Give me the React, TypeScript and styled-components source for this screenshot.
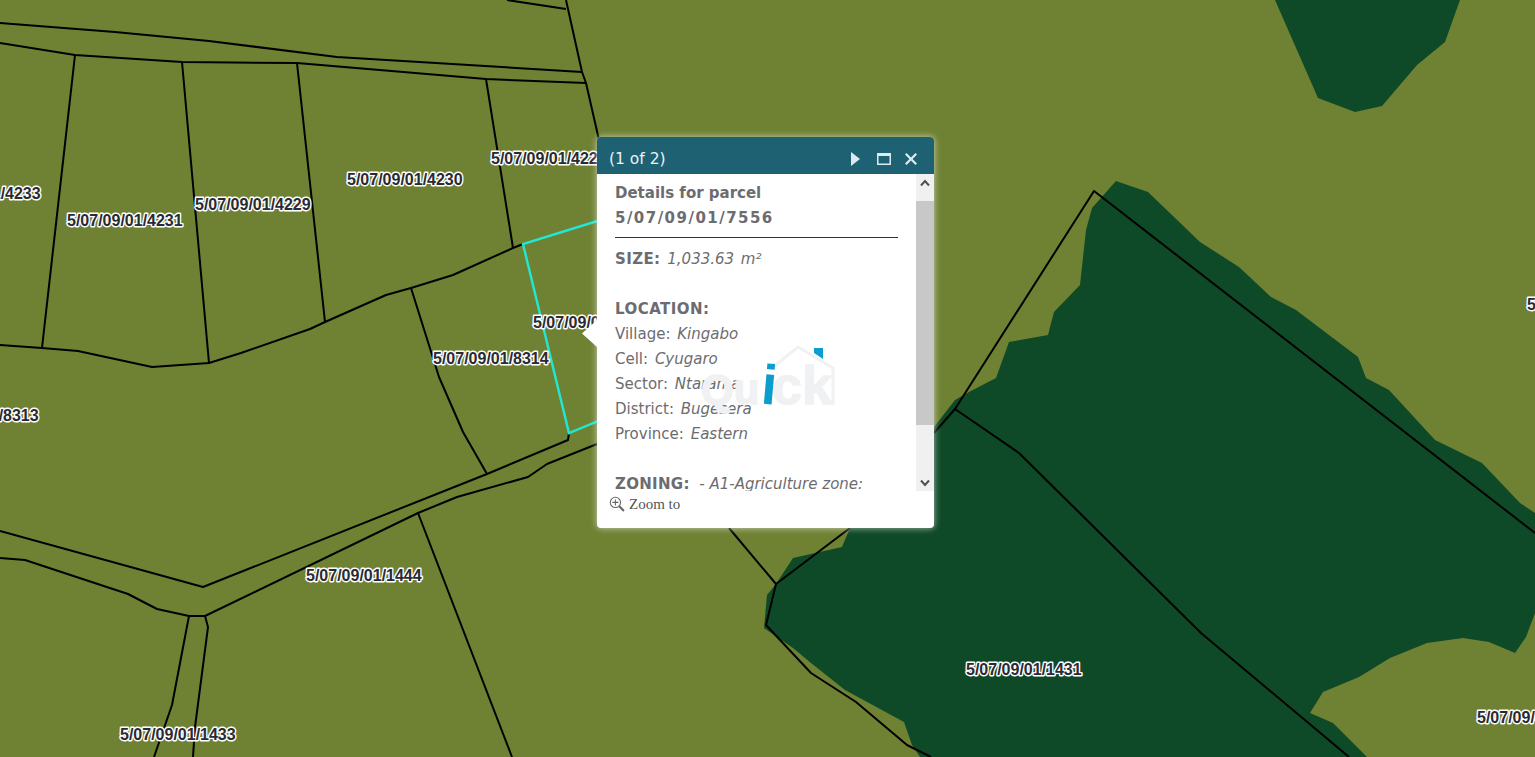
import React from "react";
import styled, { createGlobalStyle } from "styled-components";

const GlobalStyle = createGlobalStyle`
  html, body {
    margin: 0;
    padding: 0;
    height: 100%;
    overflow: hidden;
    background: #6f8133;
  }
`;

const MapView = styled.div`
  position: relative;
  width: 100vw;
  height: 100vh;
  overflow: hidden;
  background: #6f8133;
`;

const MapCanvas = styled.svg`
  display: block;
  width: 100%;
  height: 100%;
`;

const Forest = styled.polygon`
  fill: #0e4a27;
`;

const Boundary = styled.polyline`
  fill: none;
  stroke: #000;
  stroke-width: 2;
  stroke-linejoin: round;
`;

const Selected = styled.polyline`
  fill: none;
  stroke: #20e8d4;
  stroke-width: 2.4;
`;

const ParcelLabel = styled.text`
  font-family: "Liberation Sans", Arial, sans-serif;
  font-size: 16px;
  font-weight: 700;
  fill: #2a2a32;
  stroke: #fff;
  stroke-width: 2.8px;
  paint-order: stroke;
  stroke-linejoin: round;
`;

const Popup = styled.div`
  position: absolute;
  left: 597px;
  top: 137px;
  width: 337px;
  height: 391px;
  display: flex;
  flex-direction: column;
  border-radius: 4px;
  background: #fff;
  box-shadow: 0 0 7px rgba(255, 255, 255, 0.65);
`;

const Pointer = styled.div`
  position: absolute;
  left: -15px;
  top: 183px;
  width: 15px;
  height: 27px;
  background: #fff;
  clip-path: polygon(100% 0, 0 50%, 100% 100%);
`;

const PopupHeader = styled.div`
  flex: 0 0 37px;
  display: flex;
  align-items: center;
  justify-content: space-between;
  padding: 6px 16px 0 12px;
  box-sizing: border-box;
  border-radius: 4px 4px 0 0;
  background: rgba(22, 92, 110, 0.97);
  color: #e8f3f6;
  font: 15.5px "DejaVu Sans", Verdana, sans-serif;
`;

const HeaderActions = styled.div`
  display: flex;
  align-items: center;
  gap: 13px;
`;

const HeaderIcon = styled.svg`
  display: block;
  width: 14px;
  height: 14px;
  fill: #dcebf0;
`;

const PopupBody = styled.div`
  flex: 0 0 317px;
  display: flex;
  overflow: hidden;
`;

const Details = styled.div`
  flex: 1;
  min-width: 0;
  overflow: hidden;
  padding: 7px 18px 0;
  color: #6c6c70;
  font: 15px/25px "DejaVu Sans", Verdana, sans-serif;
  word-spacing: 2px;
`;

const Line = styled.div`
  white-space: nowrap;
`;

const Strong = styled.b<{ $tracking?: number }>`
  font-weight: 700;
  word-spacing: 0;
  letter-spacing: ${(props) => props.$tracking ?? 0}px;
`;

const Value = styled.i<{ $tight?: boolean }>`
  font-style: italic;
  word-spacing: ${(props) => (props.$tight ? "0" : "2px")};
`;

const Rule = styled.hr`
  margin: 6px 0 9px;
  border: 0;
  height: 1px;
  background: #333;
`;

const Gap = styled.div`
  height: 25px;
`;

const Scrollbar = styled.div`
  flex: 0 0 18px;
  display: flex;
  flex-direction: column;
  background: #f0f0f0;
`;

const ScrollButton = styled.div`
  flex: 0 0 17px;
  display: flex;
  align-items: center;
  justify-content: center;
`;

const ScrollTrack = styled.div`
  flex: 1;
  padding-top: 10px;
`;

const ScrollThumb = styled.div`
  height: 224px;
  background: #c8c8c8;
`;

const Chevron = styled.svg`
  display: block;
  width: 10px;
  height: 8px;
  fill: none;
  stroke: #505050;
  stroke-width: 2;
`;

const PopupFooter = styled.div`
  flex: 1;
  display: flex;
  align-items: flex-start;
  gap: 4px;
  padding: 5px 12px 0;
  color: #555;
  font: 15px/17px "Liberation Serif", "Times New Roman", serif;
`;

const ZoomIcon = styled.svg`
  display: block;
  flex: none;
  width: 16px;
  height: 16px;
  fill: none;
  stroke: #666;
`;

const Loader = styled.svg`
  position: absolute;
  left: 97px;
  top: 204px;
  width: 145px;
  height: 70px;
  overflow: visible;
`;

const LogoLetters = styled.text`
  font-family: "Liberation Sans", Arial, sans-serif;
  font-weight: 700;
  fill: #f0f1f3;
  stroke: #f0f1f3;
  stroke-width: 1.5px;
`;

const LogoDot = styled(LogoLetters)`
  fill: #0b9dcd;
  stroke: none;
`;

const LogoFlag = styled.polygon`
  fill: #0b9dcd;
`;

const LogoRoof = styled.polyline`
  fill: none;
  stroke: #f0f1f3;
  stroke-width: 3;
`;

const forests = [
  "1275,0 1318,98 1355,112 1382,106 1417,65 1445,42 1460,0",
  "934,427 955,400 969,392 996,378 1009,342 1048,335 1054,312 1080,285 1086,230 1092,208 1116,181 1148,192 1200,242 1239,267 1271,297 1296,310 1358,357 1366,378 1389,390 1435,440 1482,463 1520,503 1535,513 1535,613 1526,637 1515,653 1489,642 1463,638 1427,643 1390,658 1359,677 1323,692 1310,713 1333,723 1367,757 920,757 912,745 904,722 845,690 811,663 793,648 764,628 767,595 776,584 793,558 842,547 850,528 900,500",
];

const boundaries = [
  "507,0 566,9",
  "566,0 582,72 586,83 599,140",
  "0,23 115,32 209,41 337,57 582,72",
  "0,43 75,55 182,62 297,63 486,79 586,83",
  "75,55 42,348",
  "182,62 209,363",
  "297,63 325,322",
  "486,79 513,248",
  "0,345 42,348 78,351 152,367 209,363 241,353 310,329 325,322 386,295 411,288 453,275 513,248 523,244",
  "411,288 439,377 463,432 487,474",
  "569,433 568,440 487,474 203,587 0,531",
  "597,444 547,464 528,477 457,497 418,513 205,616 189,616 157,609 128,594 25,560 0,558",
  "418,513 512,757",
  "189,616 172,705 154,757",
  "205,616 208,627 195,727 193,757",
  "934,433 955,409 1094,191 1535,533",
  "955,409 1019,453 1201,633 1349,757",
  "729,528 776,584 850,528",
  "776,584 766,625 811,673 856,702 907,745 931,757",
];

const labels = [
  { x: -75, y: 199, text: "5/07/09/01/4233" },
  { x: 67, y: 226, text: "5/07/09/01/4231" },
  { x: 195, y: 210, text: "5/07/09/01/4229" },
  { x: 347, y: 185, text: "5/07/09/01/4230" },
  { x: 491, y: 164, text: "5/07/09/01/4228" },
  { x: 533, y: 328, text: "5/07/09/01/7556" },
  { x: 433, y: 364, text: "5/07/09/01/8314" },
  { x: -77, y: 421, text: "5/07/09/01/8313" },
  { x: 306, y: 581, text: "5/07/09/01/1444" },
  { x: 120, y: 740, text: "5/07/09/01/1433" },
  { x: 966, y: 675, text: "5/07/09/01/1431" },
  { x: 1527, y: 310, text: "5/07/09/01/1432" },
  { x: 1477, y: 723, text: "5/07/09/01/1430" },
];

const location = [
  ["Village", "Kingabo"],
  ["Cell", "Cyugaro"],
  ["Sector", "Ntarama"],
  ["District", "Bugesera"],
  ["Province", "Eastern"],
];

const App: React.FC = () => {
  return (
    <MapView>
      <GlobalStyle />
      <MapCanvas viewBox="0 0 1535 757">
        {forests.map((points) => (
          <Forest key={points} points={points} />
        ))}
        {boundaries.map((points) => (
          <Boundary key={points} points={points} />
        ))}
        <Selected points="620,214 523,244 569,433 620,412" />
        {labels.map((label) => (
          <ParcelLabel key={label.text} x={label.x} y={label.y}>
            {label.text}
          </ParcelLabel>
        ))}
      </MapCanvas>

      <Popup>
        <Pointer />
        <PopupHeader>
          <span>(1 of 2)</span>
          <HeaderActions>
            <HeaderIcon viewBox="0 0 14 14">
              <polygon points="1,0 10,7 1,14" />
            </HeaderIcon>
            <HeaderIcon viewBox="0 0 14 14">
              <path fillRule="evenodd" d="M0 1h14v12H0zM1.5 4v7.5h11V4z" />
            </HeaderIcon>
            <HeaderIcon viewBox="0 0 14 14">
              <path d="M2.6 1 7 5.4 11.4 1 13 2.6 8.6 7 13 11.4 11.4 13 7 8.6 2.6 13 1 11.4 5.4 7 1 2.6z" />
            </HeaderIcon>
          </HeaderActions>
        </PopupHeader>

        <PopupBody>
          <Details>
            <Line>
              <Strong>Details for parcel</Strong>
            </Line>
            <Line>
              <Strong $tracking={1.47}>5/07/09/01/7556</Strong>
            </Line>
            <Rule />
            <Line>
              <Strong $tracking={0.4}>SIZE:</Strong> <Value>1,033.63 m²</Value>
            </Line>
            <Gap />
            <Line>
              <Strong $tracking={0.45}>LOCATION:</Strong>
            </Line>
            {location.map(([name, value]) => (
              <Line key={name}>
                {name}: <Value>{value}</Value>
              </Line>
            ))}
            <Gap />
            <Line>
              <Strong $tracking={0.3}>ZONING:</Strong>
              <Value $tight>&nbsp; - A1-Agriculture zone:</Value>
            </Line>
          </Details>
          <Scrollbar>
            <ScrollButton>
              <Chevron viewBox="0 0 10 8">
                <polyline points="1,6.5 5,2 9,6.5" />
              </Chevron>
            </ScrollButton>
            <ScrollTrack>
              <ScrollThumb />
            </ScrollTrack>
            <ScrollButton>
              <Chevron viewBox="0 0 10 8">
                <polyline points="1,1.5 5,6 9,1.5" />
              </Chevron>
            </ScrollButton>
          </Scrollbar>
        </PopupBody>

        <PopupFooter>
          <ZoomIcon viewBox="0 0 15 15">
            <circle cx="6" cy="6" r="4.8" />
            <path d="M6 3.2v5.6M3.2 6h5.6" />
            <path d="M9.6 9.6 14 14" strokeWidth="2" />
          </ZoomIcon>
          <span>Zoom to</span>
        </PopupFooter>

        <Loader viewBox="0 0 145 70">
          <LogoRoof points="79,26 104,6 139,27 139,62 128,62" />
          <LogoLetters x="7" y="63" fontSize="42">
            Qu
          </LogoLetters>
          <LogoLetters x="78" y="63" fontSize="54">
            ck
          </LogoLetters>
          <LogoDot x="66" y="63" fontSize="56" transform="rotate(5 71 63)">
            i
          </LogoDot>
          <LogoFlag points="120,7 129,7 129,18 120,12" />
        </Loader>
      </Popup>
    </MapView>
  );
};

export default App;
